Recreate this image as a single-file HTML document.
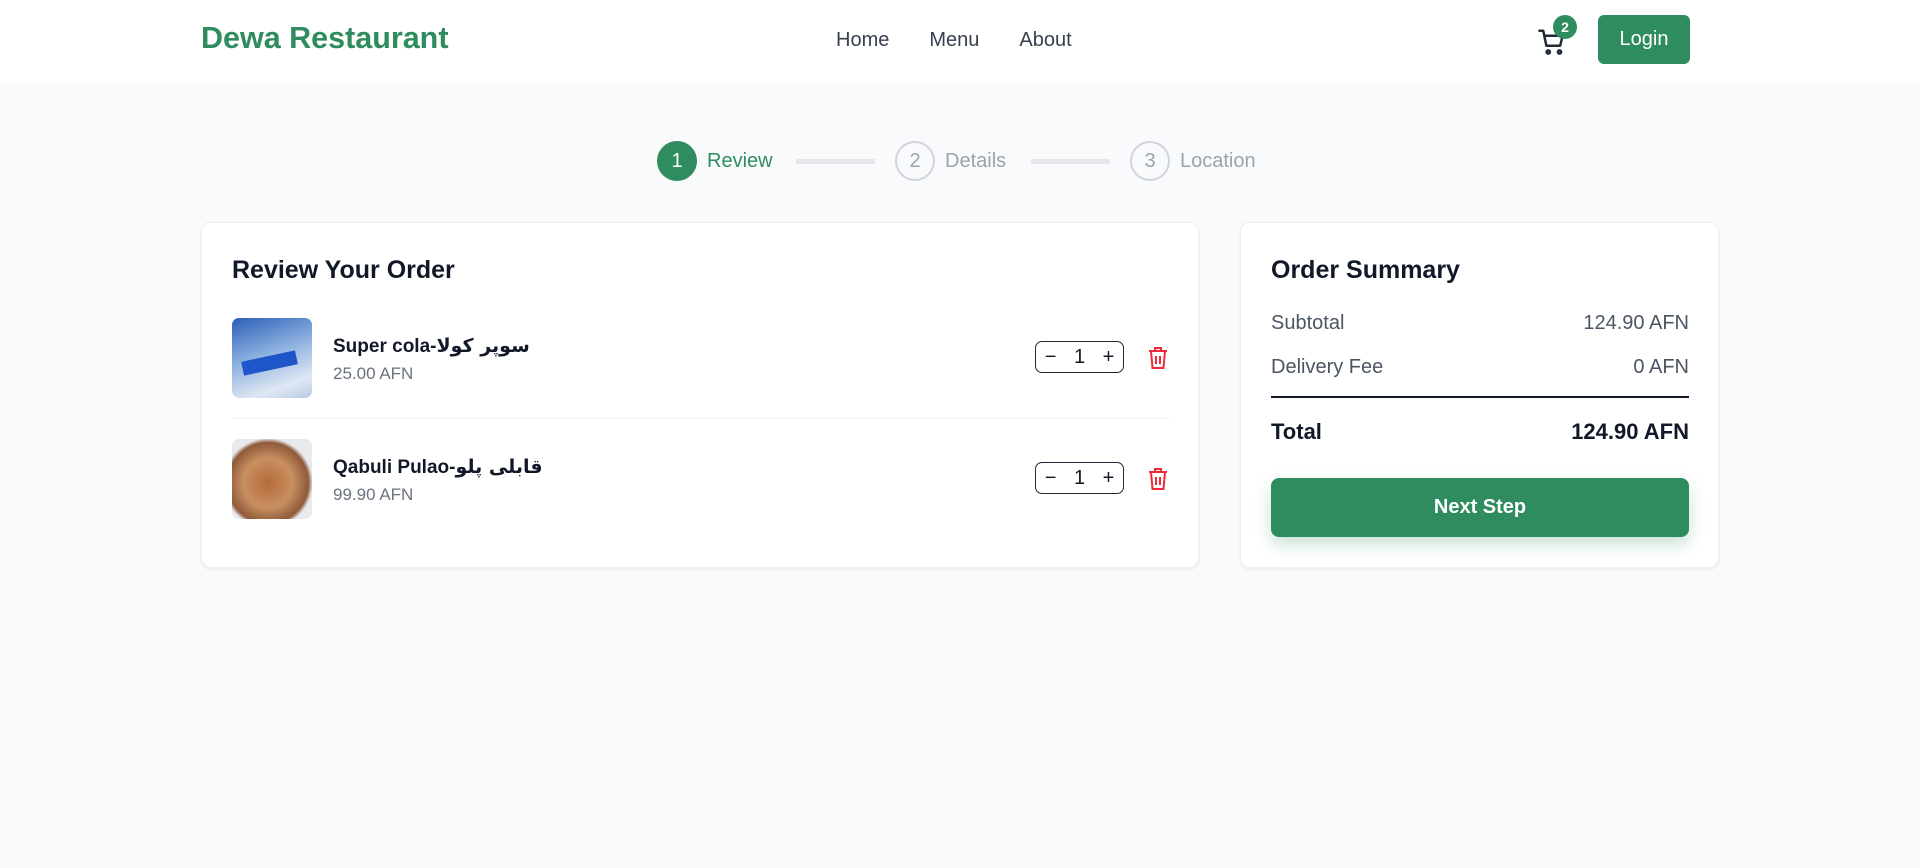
<!DOCTYPE html>
<html><head><meta charset="utf-8"><style>
*{box-sizing:border-box;margin:0;padding:0}
body{width:1920px;height:868px;background:#f9fafb;font-family:"Liberation Sans","DejaVu Sans",sans-serif;color:#111827;position:relative;overflow:hidden}
.nav{position:absolute;left:0;top:0;width:1920px;height:81px;background:#fff}
.logo{position:absolute;left:201px;top:21px;font-size:30.5px;font-weight:700;color:#2f8c5f}
.links{position:absolute;left:836px;top:29px;font-size:20px;color:#374151}
.links span{margin-right:40px}
.login{position:absolute;left:1598px;top:15px;width:92px;height:49px;background:#2f8c5f;color:#fff;border-radius:6px;font-size:20px;display:flex;align-items:center;justify-content:center}
.badge{position:absolute;left:1553px;top:15px;width:24px;height:24px;border-radius:50%;background:#2f8c5f;color:#fff;font-size:14px;font-weight:700;display:flex;align-items:center;justify-content:center}
.step{position:absolute;top:141px;display:flex;align-items:center;font-size:20px;color:#9ca3af}
.circ{width:40px;height:40px;border-radius:50%;border:2px solid #d1d5db;display:flex;align-items:center;justify-content:center;margin-right:10px;font-size:20px}
.bar{position:absolute;top:159px;height:5px;width:79px;background:#e5e7eb}
.card{position:absolute;top:222px;height:346px;background:#fff;border-radius:10px;border:1px solid #eef0f2;box-shadow:0 1px 3px rgba(0,0,0,.08)}
h2{position:absolute;left:30px;top:33px;font-size:25px;font-weight:700}
.img{position:absolute;left:30px;width:80px;height:80px;border-radius:7px}
.name{position:absolute;left:131px;font-size:19px;font-weight:700}
.price{position:absolute;left:131px;font-size:17px;color:#6b7280}
.qty{position:absolute;left:833px;width:89px;height:32px;border:1.5px solid #1f2937;border-radius:7px;display:flex;align-items:center;justify-content:space-around;font-size:20px}
.trash{position:absolute;left:944px}
.row{position:absolute;left:1271px;width:418px;display:flex;justify-content:space-between;font-size:20px;color:#4b5563}
.btn{position:absolute;left:1271px;top:478px;width:418px;height:59px;background:#2f8c5f;border-radius:8px;color:#fff;font-size:20px;font-weight:700;display:flex;align-items:center;justify-content:center;box-shadow:0 8px 16px rgba(47,140,95,.25)}
</style></head><body>
<div class="nav">
<div class="logo">Dewa Restaurant</div>
<div class="links"><span>Home</span><span>Menu</span><span>About</span></div>
<svg style="position:absolute;left:1537px;top:27px" width="30" height="30" viewBox="0 0 24 24" fill="none" stroke="#1f2937" stroke-width="2" stroke-linecap="round" stroke-linejoin="round"><path d="M2 3h3l2.5 12h11l2-8H6"/><circle cx="9" cy="20" r="1.3"/><circle cx="18" cy="20" r="1.3"/></svg>
<div class="badge">2</div>
<div class="login">Login</div>
</div>
<div class="step" style="left:657px;color:#2f8c5f"><div class="circ" style="background:#2f8c5f;border-color:#2f8c5f;color:#fff">1</div>Review</div>
<div class="bar" style="left:796px"></div>
<div class="step" style="left:895px"><div class="circ">2</div>Details</div>
<div class="bar" style="left:1031px"></div>
<div class="step" style="left:1130px"><div class="circ">3</div>Location</div>

<div class="card" style="left:201px;width:998px">
<h2>Review Your Order</h2>
<div class="img" style="top:95px;background:linear-gradient(160deg,#2a5fb8,#8fb2e0 45%,#dfe7f3 80%,#b9c9e3)"><div style="position:absolute;left:10px;top:38px;width:55px;height:14px;background:#1e55c8;transform:rotate(-12deg)"></div></div>
<div class="name" style="top:112px">Super cola-<span style="font-family:'DejaVu Sans',sans-serif">سوپر کولا</span></div>
<div class="price" style="top:141px">25.00 AFN</div>
<div class="qty" style="top:118px"><span>−</span><span>1</span><span>+</span></div>
<svg class="trash" style="top:122px" width="24" height="26" viewBox="0 0 24 26" fill="none" stroke="#ef2b3a" stroke-width="2"><path d="M3 6h18M9 6V3h6v3M5 6l1.5 17h11L19 6M10 11v8M14 11v8"/></svg>
<div style="position:absolute;left:30px;top:195px;width:938px;height:1px;background:#f1f2f4"></div>
<div class="img" style="top:216px;background:radial-gradient(circle at 45% 55%,#b56b3c,#c98f60 40%,#8e5a3a 65%,#e8eaee 72%)"></div>
<div class="name" style="top:233px">Qabuli Pulao-<span style="font-family:'DejaVu Sans',sans-serif">قابلی پلو</span></div>
<div class="price" style="top:262px">99.90 AFN</div>
<div class="qty" style="top:239px"><span>−</span><span>1</span><span>+</span></div>
<svg class="trash" style="top:243px" width="24" height="26" viewBox="0 0 24 26" fill="none" stroke="#ef2b3a" stroke-width="2"><path d="M3 6h18M9 6V3h6v3M5 6l1.5 17h11L19 6M10 11v8M14 11v8"/></svg>
</div>

<div class="card" style="left:1240px;width:479px"><h2>Order Summary</h2></div>
<div class="row" style="top:312px"><span>Subtotal</span><span>124.90 AFN</span></div>
<div class="row" style="top:356px"><span>Delivery Fee</span><span>0 AFN</span></div>
<div style="position:absolute;left:1271px;top:396px;width:418px;height:1.5px;background:#111827"></div>
<div class="row" style="top:419px;font-size:22px;font-weight:700;color:#111827"><span>Total</span><span>124.90 AFN</span></div>
<div class="btn">Next Step</div>
</body></html>
